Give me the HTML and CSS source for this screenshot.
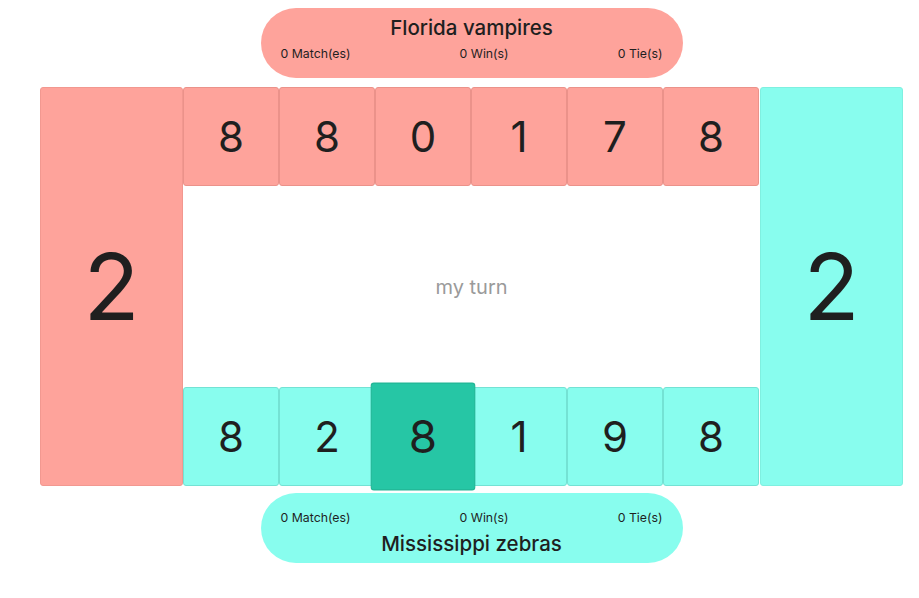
FILE: index.html
```html
<!DOCTYPE html>
<html lang="en">
<head>
    <meta charset="UTF-8">
    <meta name="viewport" content="width=device-width, initial-scale=1.0">
    <title>Mancala</title>
    <link rel="stylesheet" href="styles.css">
</head>
<body>
    <div class="game">
        <div class="player player-top">
            <div class="player-name">Florida vampires</div>
            <div class="player-stats">
                <span>0 Match(es)</span>
                <span>0 Win(s)</span>
                <span>0 Tie(s)</span>
            </div>
        </div>

        <div class="board">
            <div class="store store-top">2</div>
            <div class="middle">
                <div class="pits">
                    <div class="pit pit-top">8</div>
                    <div class="pit pit-top">8</div>
                    <div class="pit pit-top">0</div>
                    <div class="pit pit-top">1</div>
                    <div class="pit pit-top">7</div>
                    <div class="pit pit-top">8</div>
                </div>
                <div class="turn">my turn</div>
                <div class="pits">
                    <div class="pit pit-bottom">8</div>
                    <div class="pit pit-bottom">2</div>
                    <div class="pit pit-bottom selected">8</div>
                    <div class="pit pit-bottom">1</div>
                    <div class="pit pit-bottom">9</div>
                    <div class="pit pit-bottom">8</div>
                </div>
            </div>
            <div class="store store-bottom">2</div>
        </div>

        <div class="player player-bottom">
            <div class="player-stats">
                <span>0 Match(es)</span>
                <span>0 Win(s)</span>
                <span>0 Tie(s)</span>
            </div>
            <div class="player-name">Mississippi zebras</div>
        </div>
    </div>
</body>
</html>
```

FILE: styles.css
```css
body {
    margin: 0;
    font-family: 'Inter', 'Noto Sans', sans-serif;
    color: #1f1f1f;
    background-color: #ffffff;
}
.game {
    width: 863px;
    margin-left: 40px;
    padding-top: 8px;
    display: flex;
    flex-direction: column;
    align-items: center;
}
.player {
    width: 422px;
    height: 70px;
    box-sizing: border-box;
    border-radius: 35px;
    padding: 0 20px;
    display: flex;
    flex-direction: column;
    justify-content: center;
}
.player-top {
    background-color: #fea39b;
    margin-bottom: 9px;
    padding-bottom: 8px;
}
.player-bottom {
    background-color: #88fdee;
    margin-top: 7px;
    padding-top: 10px;
}
.player-name {
    font-size: 20.5px;
    font-weight: 500;
    text-align: center;
    line-height: 30px;
}
.player-stats {
    display: flex;
    justify-content: space-between;
    font-size: 12.3px;
    line-height: 22px;
}
.board {
    display: flex;
    width: 100%;
    height: 399px;
}
.store {
    width: 143px;
    flex-shrink: 0;
    box-sizing: border-box;
    border-radius: 3px;
    display: flex;
    align-items: center;
    justify-content: center;
    font-size: 92px;
}
.store-top {
    background-color: #fea39b;
    border: 1px solid #f29890;
}
.store-bottom {
    background-color: #88fdee;
    border: 1px solid #7ff0e0;
}
.middle {
    flex: 1;
    display: flex;
    flex-direction: column;
}
.pits {
    display: flex;
    height: 99px;
}
.pit {
    width: 96px;
    box-sizing: border-box;
    border-radius: 3px;
    display: flex;
    align-items: center;
    justify-content: center;
    font-size: 42px;
}
.pit-top {
    background-color: #fea39b;
    border: 1px solid #eb928a;
}
.pit-bottom {
    background-color: #88fdee;
    border: 1px solid #74e2d4;
}
.pit.selected {
    background-color: #26c6a5;
    border-color: #22b595;
    transform: scale(1.09);
    position: relative;
    z-index: 1;
}
.turn {
    flex: 1;
    display: flex;
    align-items: center;
    justify-content: center;
    font-size: 20px;
    color: #9a9a9a;
    padding-top: 1px;
}
```
